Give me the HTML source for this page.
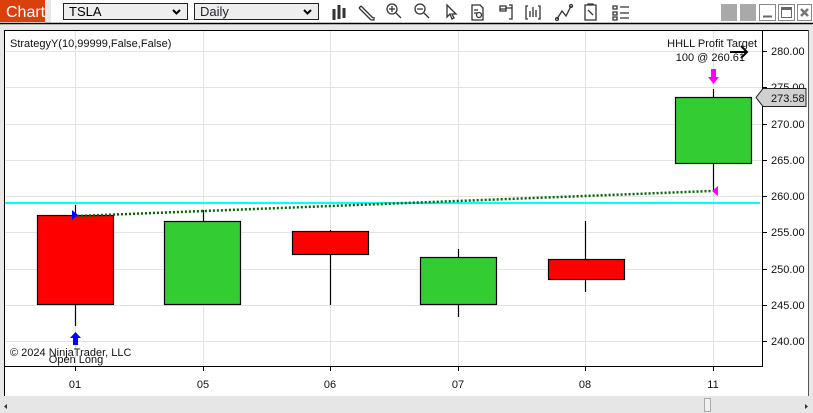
<!DOCTYPE html>
<html><head><meta charset="utf-8"><style>
html,body{margin:0;padding:0;width:813px;height:413px;overflow:hidden;background:#fff}
svg{display:block}
text{font-family:"Liberation Sans",sans-serif}
</style></head><body>
<svg width="813" height="413" viewBox="0 0 813 413" xmlns="http://www.w3.org/2000/svg">
<!-- outer bg -->
<rect x="0" y="0" width="813" height="413" fill="#e8e8e8"/>
<!-- toolbar -->
<rect x="0" y="0" width="813" height="23" fill="#fff"/>
<rect x="45" y="0" width="6" height="23" fill="#e8e8e8"/>
<rect x="0" y="0" width="45" height="22" fill="#d9410c"/>
<text x="6" y="17" font-size="16" fill="#fff">Chart</text>
<line x1="0" y1="23.5" x2="813" y2="23.5" stroke="#000" stroke-width="1.5"/>
<rect x="63.5" y="3.5" width="124" height="16" fill="#eee" stroke="#222"/>
<text x="69" y="16" font-size="13">TSLA</text>
<path d="M173 10 l3.5 3.5 l3.5-3.5" stroke="#000" stroke-width="2" fill="none"/>
<rect x="194.5" y="3.5" width="124" height="16" fill="#eee" stroke="#222"/>
<text x="200" y="16" font-size="13" fill="#223">Daily</text>
<path d="M304 10 l3.5 3.5 l3.5-3.5" stroke="#000" stroke-width="2" fill="none"/>
<!-- toolbar icons -->
<g stroke="#333" fill="none" stroke-width="1.3">
<path d="M334 9v11M339 5v14M344 8v10" stroke-width="3"/>
<path d="M361 6l12 12M359 8l12 12M361 6l-2 2M371 20l3 0l0-3"/>
<circle cx="392" cy="9" r="5"/><path d="M396 13l5 5M389 9h6M392 6v6"/>
<circle cx="420" cy="9" r="5"/><path d="M424 13l5 5M417 9h6"/>
<path d="M447 5v12l3-3l2 5l2-1l-2-4h4z"/>
<path d="M472 5h8l3 3v12h-11z M474 10h4M474 13h3"/><circle cx="479" cy="15" r="2.5"/>
<path d="M500 6h6v5h-6zM500 9h6M506 8h6M509 5h3v14h-3"/>
<path d="M528 6h-2v13h2M538 6h2v13h-2M530 17v-6M533 17v-10M536 17v-7" />
<path d="M557 19l5-8l4 5l5-10"/><circle cx="557" cy="19" r="1.5"/><circle cx="571" cy="6" r="1.5"/>
<path d="M585 5h11v15h-11zM588 5v-1h5v1M588 10l5 5"/>
<path d="M613 6h4v3h-4zM613 12h4v3h-4zM613 17h4v3h-4zM620 7h9M620 13h9M620 18h9"/>
</g>
<!-- window buttons -->
<rect x="721" y="4" width="16" height="17" fill="#a9a9a9"/>
<rect x="740" y="4" width="16" height="17" fill="#a9a9a9"/>
<rect x="759.5" y="4.5" width="16" height="16" fill="#fff" stroke="#888"/>
<line x1="763" y1="16.5" x2="772" y2="16.5" stroke="#666" stroke-width="2"/>
<rect x="778.5" y="4.5" width="16" height="16" fill="#fff" stroke="#888"/>
<rect x="781.5" y="7.5" width="10" height="10" fill="none" stroke="#666"/><line x1="781" y1="9" x2="792" y2="9" stroke="#666" stroke-width="2"/>
<rect x="797.5" y="4.5" width="14" height="16" fill="#fff" stroke="#888"/>
<path d="M801 9l7 7M808 9l-7 7" stroke="#777" stroke-width="2.5"/>
<!-- panel -->
<rect x="4" y="30" width="805" height="366" fill="#fff"/>
<line x1="4.5" y1="30" x2="4.5" y2="396" stroke="#000"/>
<line x1="4" y1="30.5" x2="809" y2="30.5" stroke="#000"/>
<line x1="808.5" y1="30" x2="808.5" y2="396" stroke="#555"/>
<!-- grid -->
<g stroke="#e3e3e3" stroke-width="1">
<line x1="75.5" y1="31" x2="75.5" y2="366"/><line x1="203.5" y1="31" x2="203.5" y2="366"/>
<line x1="330.5" y1="31" x2="330.5" y2="366"/><line x1="458.5" y1="31" x2="458.5" y2="366"/>
<line x1="585.5" y1="31" x2="585.5" y2="366"/><line x1="713.5" y1="31" x2="713.5" y2="366"/>
<line x1="5" y1="51.5" x2="762" y2="51.5"/><line x1="5" y1="87.5" x2="762" y2="87.5"/>
<line x1="5" y1="124.5" x2="762" y2="124.5"/><line x1="5" y1="160.5" x2="762" y2="160.5"/>
<line x1="5" y1="196.5" x2="762" y2="196.5"/><line x1="5" y1="232.5" x2="762" y2="232.5"/>
<line x1="5" y1="269.5" x2="762" y2="269.5"/><line x1="5" y1="305.5" x2="762" y2="305.5"/>
<line x1="5" y1="341.5" x2="762" y2="341.5"/>
</g>
<!-- axes -->
<line x1="762.5" y1="31" x2="762.5" y2="367" stroke="#000"/>
<line x1="5" y1="366.5" x2="763" y2="366.5" stroke="#000"/>
<g stroke="#000">
<line x1="762" y1="51.5" x2="767" y2="51.5"/><line x1="762" y1="87.5" x2="767" y2="87.5"/>
<line x1="762" y1="124.5" x2="767" y2="124.5"/><line x1="762" y1="160.5" x2="767" y2="160.5"/>
<line x1="762" y1="196.5" x2="767" y2="196.5"/><line x1="762" y1="232.5" x2="767" y2="232.5"/>
<line x1="762" y1="269.5" x2="767" y2="269.5"/><line x1="762" y1="305.5" x2="767" y2="305.5"/>
<line x1="762" y1="341.5" x2="767" y2="341.5"/>
<line x1="75.5" y1="366" x2="75.5" y2="371"/><line x1="203.5" y1="366" x2="203.5" y2="371"/>
<line x1="330.5" y1="366" x2="330.5" y2="371"/><line x1="458.5" y1="366" x2="458.5" y2="371"/>
<line x1="585.5" y1="366" x2="585.5" y2="371"/><line x1="713.5" y1="366" x2="713.5" y2="371"/>
</g>
<g font-size="11" fill="#111">
<text x="771" y="55">280.00</text><text x="771" y="91">275.00</text>
<text x="771" y="128">270.00</text><text x="771" y="164">265.00</text>
<text x="771" y="200">260.00</text><text x="771" y="236">255.00</text>
<text x="771" y="273">250.00</text><text x="771" y="309">245.00</text>
<text x="771" y="345">240.00</text>
<g text-anchor="middle"><text x="75" y="388">01</text><text x="203" y="388">05</text><text x="330" y="388">06</text><text x="458" y="388">07</text><text x="585" y="388">08</text><text x="713" y="388">11</text></g>
</g>
<!-- price marker -->
<path d="M756 97.5 L763 88.5 H806 V106.5 H763 Z" fill="#d0d0d0" stroke="#222"/>
<text x="771" y="102" font-size="11" fill="#111">273.58</text>
<!-- cyan line -->
<line x1="5" y1="203" x2="760" y2="203" stroke="#00ffff" stroke-width="2"/>
<!-- candles -->
<g stroke="#000" stroke-width="1.2">
<line x1="75.5" y1="205" x2="75.5" y2="326"/><rect x="37.5" y="215.5" width="76" height="89" fill="#ff0000"/>
<line x1="203.5" y1="210" x2="203.5" y2="305"/><rect x="164.5" y="221.5" width="76" height="83" fill="#33cc33"/>
<line x1="330.5" y1="230" x2="330.5" y2="305"/><rect x="292.5" y="231.5" width="76" height="23" fill="#ff0000"/>
<line x1="458.5" y1="249" x2="458.5" y2="317"/><rect x="420.5" y="257.5" width="76" height="47" fill="#33cc33"/>
<line x1="585.5" y1="221" x2="585.5" y2="292"/><rect x="548.5" y="259.5" width="76" height="20" fill="#ff0000"/>
<line x1="713.5" y1="89" x2="713.5" y2="191"/><rect x="675.5" y="97.5" width="76" height="66" fill="#33cc33"/>
</g>
<!-- dotted line -->
<line x1="77" y1="216" x2="711" y2="191" stroke="#006600" stroke-width="2.5" stroke-dasharray="2 2"/>
<path d="M72 210 L78 215 L72 220Z" fill="#0000ff"/>
<path d="M718 186 L712 191 L718 196Z" fill="#ff00ff"/>
<!-- arrows -->
<path d="M73 345 V338 H70 L75.5 332 L81 338 H78 V345Z" fill="#0000ff"/>
<path d="M711 69 V77 H708 L713.5 84 L719 77 H716 V69Z" fill="#ff00ff"/>
<path d="M730 52 H747 M741 46 L747 52 L741 58" stroke="#000" stroke-width="2" fill="none"/>
<!-- texts -->
<text x="10" y="47" font-size="11" fill="#111">StrategyY(10,99999,False,False)</text>
<text x="757" y="47" font-size="11" fill="#111" text-anchor="end">HHLL Profit Target</text>
<text x="745" y="61" font-size="11" fill="#111" text-anchor="end">100 @ 260.61</text>
<text x="10" y="356" font-size="11" fill="#111">© 2024 NinjaTrader, LLC</text>
<text x="76" y="363" font-size="11" fill="#111" text-anchor="middle">Open Long</text>
<!-- scrollbar -->
<rect x="0" y="397" width="813" height="16" fill="#e6e6e6"/>
<path d="M7 404 L4 406.5 L7 409Z" fill="#333"/>
<path d="M805 404 L808 406.5 L805 409Z" fill="#333"/>
<rect x="704.5" y="398.5" width="6" height="13" fill="#f0f0f0" stroke="#aaa"/>
</svg>
</body></html>
